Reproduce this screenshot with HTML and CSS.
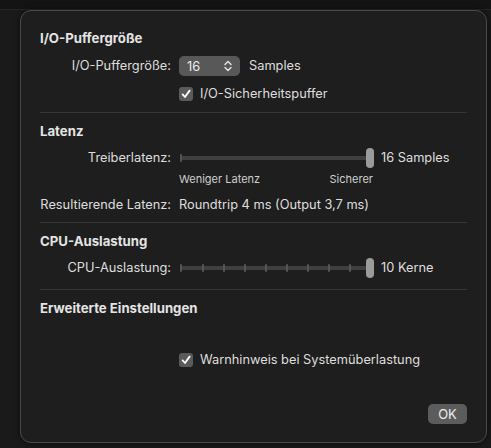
FILE: index.html
```html
<!DOCTYPE html>
<html lang="de">
<head>
  <meta charset="UTF-8" />
  <title>Audio-Einstellungen</title>
  <link rel="stylesheet" href="styles.css">
</head>
<body>
  <div class="backdrop-top"></div>

  <div class="sheet">
    <h3 class="head head-first">I/O-Puffergröße</h3>

    <div class="row row-popup">
      <span class="label">I/O-Puffergröße:</span>
      <div class="ctrl">
        <div class="popup">
          <span>16</span>
          <svg width="8" height="12" viewBox="0 0 8 12">
            <path d="M1 4.5 L4 1.5 L7 4.5 M1 7.5 L4 10.5 L7 7.5" fill="none" stroke="#e6e6e6" stroke-width="1.4" stroke-linecap="round" stroke-linejoin="round"/>
          </svg>
        </div>
        <span class="unit">Samples</span>
      </div>
    </div>

    <div class="row row-check">
      <span class="label"></span>
      <label class="check">
        <span class="box">
          <svg width="10" height="10" viewBox="0 0 10 10"><path d="M1.6 5.4 L4 8 L8.6 1.6" fill="none" stroke="#fff" stroke-width="1.8" stroke-linecap="round" stroke-linejoin="round"/></svg>
        </span>
        I/O-Sicherheitspuffer
      </label>
    </div>

    <div class="sep"></div>

    <h3 class="head">Latenz</h3>

    <div class="row row-slider">
      <span class="label">Treiberlatenz:</span>
      <div class="ctrl">
        <div class="slider">
          <span class="tick tick-start"></span>
          <span class="thumb"></span>
        </div>
        <span class="unit">16 Samples</span>
      </div>
    </div>

    <div class="row row-ends">
      <span class="label"></span>
      <div class="ends">
        <span>Weniger Latenz</span>
        <span>Sicherer</span>
      </div>
    </div>

    <div class="row row-result">
      <span class="label">Resultierende Latenz:</span>
      <span class="value">Roundtrip 4 ms (Output 3,7 ms)</span>
    </div>

    <div class="sep sep-b"></div>

    <h3 class="head">CPU-Auslastung</h3>

    <div class="row row-slider row-cpu">
      <span class="label">CPU-Auslastung:</span>
      <div class="ctrl">
        <div class="slider ticks">
          <span class="tick"></span>
          <span class="tick"></span>
          <span class="tick"></span>
          <span class="tick"></span>
          <span class="tick"></span>
          <span class="tick"></span>
          <span class="tick"></span>
          <span class="tick"></span>
          <span class="tick"></span>
          <span class="thumb"></span>
        </div>
        <span class="unit">10 Kerne</span>
      </div>
    </div>

    <div class="sep sep-c"></div>

    <h3 class="head">Erweiterte Einstellungen</h3>

    <div class="row row-warn">
      <span class="label"></span>
      <label class="check">
        <span class="box">
          <svg width="10" height="10" viewBox="0 0 10 10"><path d="M1.6 5.4 L4 8 L8.6 1.6" fill="none" stroke="#fff" stroke-width="1.8" stroke-linecap="round" stroke-linejoin="round"/></svg>
        </span>
        Warnhinweis bei Systemüberlastung
      </label>
    </div>

    <div class="footer">
      <button class="ok">OK</button>
    </div>
  </div>
</body>
</html>
```

FILE: styles.css
```css
body {
  margin: 0;
  background: #1a1a1a;
  color: #dedede;
  font-family: "Inter", "Liberation Sans", sans-serif;
  font-size: 12.8px;
  height: 448px;
  overflow: hidden;
}

.backdrop-top {
  height: 9px;
  background: #141414;
  border-bottom: 1px solid #262626;
  margin-bottom: -10px;
}

.sheet {
  margin: 10px 4px 0 20px;
  height: 431px;
  background: #1e1e1e;
  border: 1px solid #4a4a4a;
  border-radius: 11px;
  padding: 0 19px 0 19px;
  box-shadow: 0 0 6px rgba(0, 0, 0, 0.6);
  position: relative;
}

.head {
  margin: 10px 0 0;
  font-size: 13.2px;
  font-weight: 700;
  line-height: 16px;
  color: #e4e4e4;
}

.head-first {
  margin-top: 19px;
}

.row {
  display: grid;
  grid-template-columns: 131px 1fr;
  column-gap: 8px;
  align-items: center;
}

.label {
  text-align: right;
  line-height: 16px;
  white-space: nowrap;
}

.ctrl {
  display: flex;
  align-items: center;
}

.row-popup {
  margin-top: 10px;
  height: 20px;
}

.popup {
  width: 61px;
  height: 20px;
  box-sizing: border-box;
  background: #585858;
  border-radius: 5px;
  display: flex;
  align-items: center;
  justify-content: space-between;
  padding: 0 8px 0 8px;
  color: #ececec;
  margin-right: 9px;
}

.unit {
  line-height: 16px;
}

.row-check {
  margin-top: 10px;
  height: 16px;
}

.check {
  display: flex;
  align-items: center;
  gap: 7px;
  line-height: 16px;
}

.box {
  width: 14px;
  height: 14px;
  border-radius: 3px;
  background: #5a5a5a;
  display: flex;
  align-items: center;
  justify-content: center;
}

.sep {
  margin-top: 10px;
  height: 1px;
  background: #363636;
}

.sep-b {
  margin-top: 9px;
}

.sep-c {
  margin-top: 11px;
}

.row-slider {
  margin-top: 9px;
  height: 20px;
}

.slider {
  position: relative;
  width: 194px;
  height: 4px;
  background: #3f3f3f;
  border-radius: 2px;
  margin-left: 1px;
  margin-right: 7px;
}

.tick {
  position: absolute;
  top: -2px;
  width: 2px;
  height: 8px;
  background: #555;
  border-radius: 1px;
}

.tick-start {
  left: 0;
}

.ticks .tick:nth-child(1) { left: 0; }
.ticks .tick:nth-child(2) { left: 22px; }
.ticks .tick:nth-child(3) { left: 43px; }
.ticks .tick:nth-child(4) { left: 64px; }
.ticks .tick:nth-child(5) { left: 85px; }
.ticks .tick:nth-child(6) { left: 106px; }
.ticks .tick:nth-child(7) { left: 127px; }
.ticks .tick:nth-child(8) { left: 148px; }
.ticks .tick:nth-child(9) { left: 169px; }

.thumb {
  position: absolute;
  right: 0;
  top: -8px;
  width: 8px;
  height: 20px;
  border-radius: 4px;
  background: #9b9b9b;
}

.row-ends {
  margin-top: 5px;
  height: 12px;
}

.ends {
  width: 194px;
  display: flex;
  justify-content: space-between;
  font-size: 11px;
  line-height: 12px;
  color: #cfcfcf;
}

.row-result {
  margin-top: 12px;
  height: 16px;
}

.value {
  line-height: 16px;
}

.row-warn {
  margin-top: 36px;
  height: 16px;
}

.footer {
  display: flex;
  justify-content: flex-end;
  margin-top: 36px;
}

.ok {
  width: 39px;
  height: 20px;
  border: none;
  border-radius: 5px;
  background: #5c5c5c;
  color: #ececec;
  font-family: "Inter", "Liberation Sans", sans-serif;
  font-size: 13px;
  padding: 0;
}
```
